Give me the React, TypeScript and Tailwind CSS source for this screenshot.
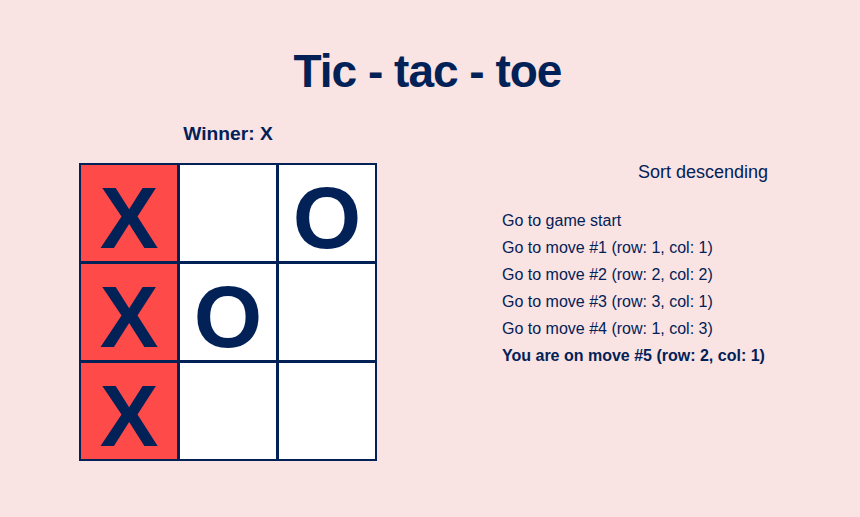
import React from "react";

const squares: (string | null)[] = ["X", null, "O", "X", "O", null, "X", null, null];
const winLine = [0, 3, 6];

const moves = [
  "Go to game start",
  "Go to move #1 (row: 1, col: 1)",
  "Go to move #2 (row: 2, col: 2)",
  "Go to move #3 (row: 3, col: 1)",
  "Go to move #4 (row: 1, col: 3)",
];

const App: React.FC = () => {
  return (
    <div
      className="min-h-[517px] w-full bg-[#f9e3e3] text-[#022157]"
      style={{ fontFamily: '"Liberation Sans", Arial, sans-serif' }}
    >
      <h1 className="pt-[45px] pr-[5px] text-center text-[46px] leading-[52px] font-bold tracking-[-1px]">
        Tic - tac - toe
      </h1>

      <div className="flex gap-[125px] pl-[79px]">
        <div className="flex w-[298px] flex-col">
          <div className="mt-[25px] text-center text-[19.2px] leading-[24px] font-bold">Winner: X</div>

          <div className="mt-[17px] grid grid-cols-[96px_96px_96px] gap-[3px] bg-[#022157] p-[2px]">
            {squares.map((value, i) => (
              <button
                key={i}
                className={`flex h-[96px] items-start justify-center pt-[10px] text-[88px] leading-[86px] font-bold ${
                  winLine.includes(i) ? "bg-[#ff4a4a]" : "bg-white"
                }`}
                aria-label={`Square ${i + 1}`}
              >
                {value}
              </button>
            ))}
          </div>
        </div>

        <div className="mt-[63px] flex w-[266px] flex-col">
          <div className="flex justify-end">
            <button className="text-[18px] leading-[24px]">Sort descending</button>
          </div>
          <ol className="mt-[23px] flex flex-col">
            {moves.map((move) => (
              <li key={move} className="text-[16px] leading-[27px]">
                <button>{move}</button>
              </li>
            ))}
            <li className="text-[16px] leading-[27px] font-bold">You are on move #5 (row: 2, col: 1)</li>
          </ol>
        </div>
      </div>
    </div>
  );
};

export default App;
